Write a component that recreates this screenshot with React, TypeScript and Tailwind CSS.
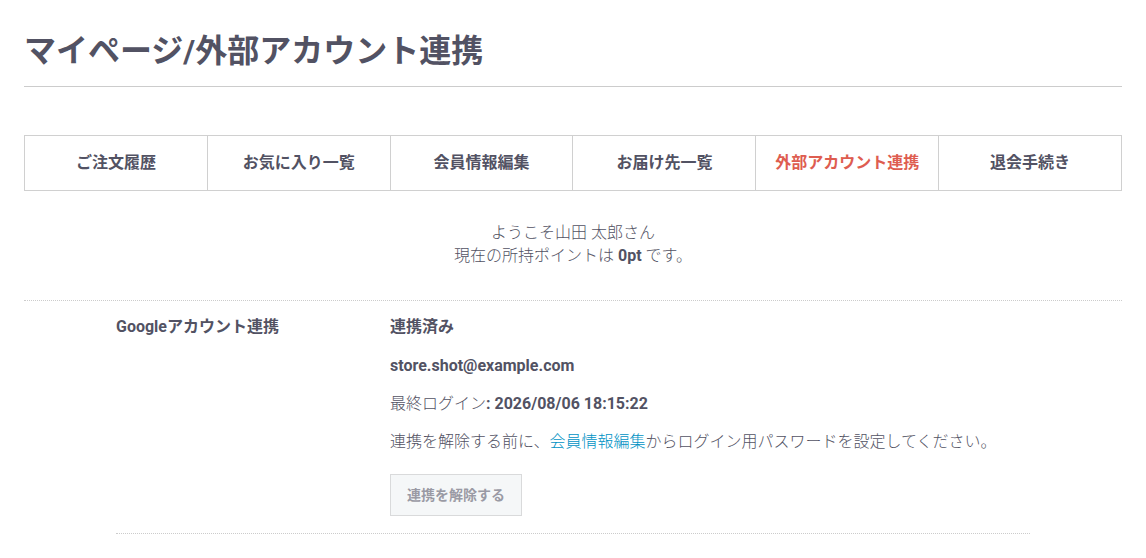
const tabs = [
  { label: "ご注文履歴" },
  { label: "お気に入り一覧" },
  { label: "会員情報編集" },
  { label: "お届け先一覧" },
  { label: "外部アカウント連携", active: true },
  { label: "退会手続き" },
];

export default function App() {
  return (
    <div className="min-h-screen bg-white px-6 text-[16px] font-light text-[#525263] [font-family:Roboto,'Noto_Sans_CJK_JP',sans-serif]">
      <h1 className="border-b border-[#ccc] pb-3 pt-[29px] text-[32px] font-bold leading-[44.8px]">
        マイページ/外部アカウント連携
      </h1>

      <ul className="mt-12 grid grid-cols-6 border-l border-t border-[#d0d0d0]">
        {tabs.map((t) => (
          <li key={t.label} className="border-b border-r border-[#d0d0d0]">
            <a
              href="#"
              className={`block p-4 text-center font-bold leading-[22.4px] ${
                t.active ? "text-[#de5d50]" : "text-[#525263]"
              }`}
            >
              {t.label}
            </a>
          </li>
        ))}
      </ul>

      <div className="mt-[30px] border-b border-dotted border-[#ccc] pb-[33px] text-center leading-[23px]">
        <p>ようこそ山田 太郎さん</p>
        <p>
          現在の所持ポイントは <span className="font-bold">0pt</span> です。
        </p>
      </div>

      <dl className="mx-auto flex w-[914px] border-b border-dotted border-[#ccc] pb-[17px] pt-[15px] leading-[22.4px]">
        <dt className="w-[274px] shrink-0 font-bold">Googleアカウント連携</dt>
        <dd className="flex-1">
          <p className="mb-4 font-bold">連携済み</p>
          <p className="mb-4 font-bold">store.shot@example.com</p>
          <p className="mb-4">
            最終ログイン<span className="font-bold">: 2026/08/06 18:15:22</span>
          </p>
          <p>
            連携を解除する前に、
            <a href="#" className="text-[#0092c4]">
              会員情報編集
            </a>
            からログイン用パスワードを設定してください。
          </p>
          <button
            type="button"
            disabled
            className="mt-5 h-[42px] border border-[#d9dadb] bg-[#f5f7f8] px-4 text-[14px] font-bold text-[#9a9aa4]"
          >
            連携を解除する
          </button>
        </dd>
      </dl>
    </div>
  );
}
